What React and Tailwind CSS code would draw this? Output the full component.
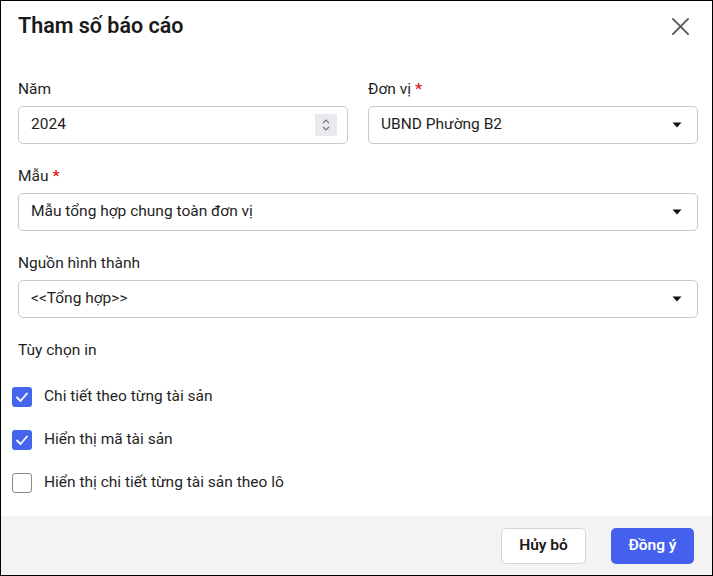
import { useState } from "react";

function Caret() {
    return (
        <svg width="10" height="6" viewBox="0 0 10 6" className="shrink-0">
            <path d="M0.5 0.5 L9.5 0.5 L5 5.5 Z" fill="#111" />
        </svg>
    );
}

function Field({ label, required, children }) {
    return (
        <div className="flex flex-col gap-[7px]">
            <label className="h-5 text-[15.5px] leading-5 text-[#1f1f1f]">
                {label}
                {required && <span className="ml-1 font-bold text-[#e11d1d]">*</span>}
            </label>
            {children}
        </div>
    );
}

function Select({ value }) {
    return (
        <div className="flex h-[38px] items-center justify-between rounded-[5px] border border-[#c9c9c9] bg-white pl-3 pr-[15px] text-[15.5px] text-[#1f1f1f]">
            <span>{value}</span>
            <Caret />
        </div>
    );
}

function Check({ checked, label, onToggle }) {
    return (
        <div className="flex h-5 items-center gap-3 cursor-pointer" onClick={onToggle}>
            {checked ? (
                <span className="flex h-5 w-5 items-center justify-center rounded-[3px] bg-[#4466ee]">
                    <svg width="14" height="14" viewBox="0 0 14 14">
                        <path d="M2 7.5 L5.5 11 L12 3.5" stroke="white" strokeWidth="1.8" fill="none" strokeLinecap="round" strokeLinejoin="round" />
                    </svg>
                </span>
            ) : (
                <span className="h-5 w-5 rounded-[3px] border border-[#8a8a8a] bg-white" />
            )}
            <span className="text-[15.5px] text-[#1f1f1f]">{label}</span>
        </div>
    );
}

export default function App() {
    const [opts, setOpts] = useState([true, true, false]);
    const toggle = (i) => setOpts(opts.map((v, j) => (j === i ? !v : v)));

    return (
        <div className="flex h-[576px] w-[713px] flex-col border border-black bg-white font-['Roboto',sans-serif]">
            <div className="flex h-[50px] items-center justify-between pl-[17px] pr-[22px]">
                <h1 className="text-[21.5px] font-semibold text-[#1a1a1a]">Tham số báo cáo</h1>
                <svg width="19" height="19" viewBox="0 0 20 20">
                    <path d="M2 2 L18 18 M18 2 L2 18" stroke="#555" strokeWidth="1.9" strokeLinecap="round" />
                </svg>
            </div>

            <div className="flex flex-1 flex-col pl-[17px] pr-[14px] pt-[28px]">
                <div className="grid grid-cols-2 gap-x-5">
                    <Field label="Năm">
                        <div className="flex h-[38px] items-center justify-between rounded-[5px] border border-[#c9c9c9] bg-white pl-3 pr-[10px] text-[15.5px] text-[#1f1f1f]">
                            <span>2024</span>
                            <span className="flex h-[22px] w-[22px] flex-col items-center justify-center bg-[#e9e9ee]">
                                <svg width="10" height="16" viewBox="0 0 10 16">
                                    <path d="M2 6 L5 3 L8 6 M2 10 L5 13 L8 10" stroke="#777" strokeWidth="1.2" fill="none" />
                                </svg>
                            </span>
                        </div>
                    </Field>
                    <Field label="Đơn vị" required>
                        <Select value="UBND Phường B2" />
                    </Field>
                </div>

                <div className="mt-[22px]">
                    <Field label="Mẫu" required>
                        <Select value="Mẫu tổng hợp chung toàn đơn vị" />
                    </Field>
                </div>

                <div className="mt-[22px]">
                    <Field label="Nguồn hình thành">
                        <Select value="<<Tổng hợp>>" />
                    </Field>
                </div>

                <div className="mt-[22px] h-5 text-[15.5px] leading-5 text-[#1f1f1f]">Tùy chọn in</div>

                <div className="-ml-[6px] mt-[27px] flex flex-col gap-[23px]">
                    <Check checked={opts[0]} label="Chi tiết theo từng tài sản" onToggle={() => toggle(0)} />
                    <Check checked={opts[1]} label="Hiển thị mã tài sản" onToggle={() => toggle(1)} />
                    <Check checked={opts[2]} label="Hiển thị chi tiết từng tài sản theo lô" onToggle={() => toggle(2)} />
                </div>
            </div>

            <div className="flex h-[59px] items-center justify-end gap-[25px] bg-[#f3f3f3] pr-[18px]">
                <button className="h-9 w-[85px] rounded-[5px] border border-[#d4d4d8] bg-white text-[15.5px] font-semibold text-[#1a1a1a]">Hủy bỏ</button>
                <button className="h-9 w-[83px] rounded-[5px] bg-[#4361ee] text-[15.5px] font-semibold text-white">Đồng ý</button>
            </div>
        </div>
    );
}
